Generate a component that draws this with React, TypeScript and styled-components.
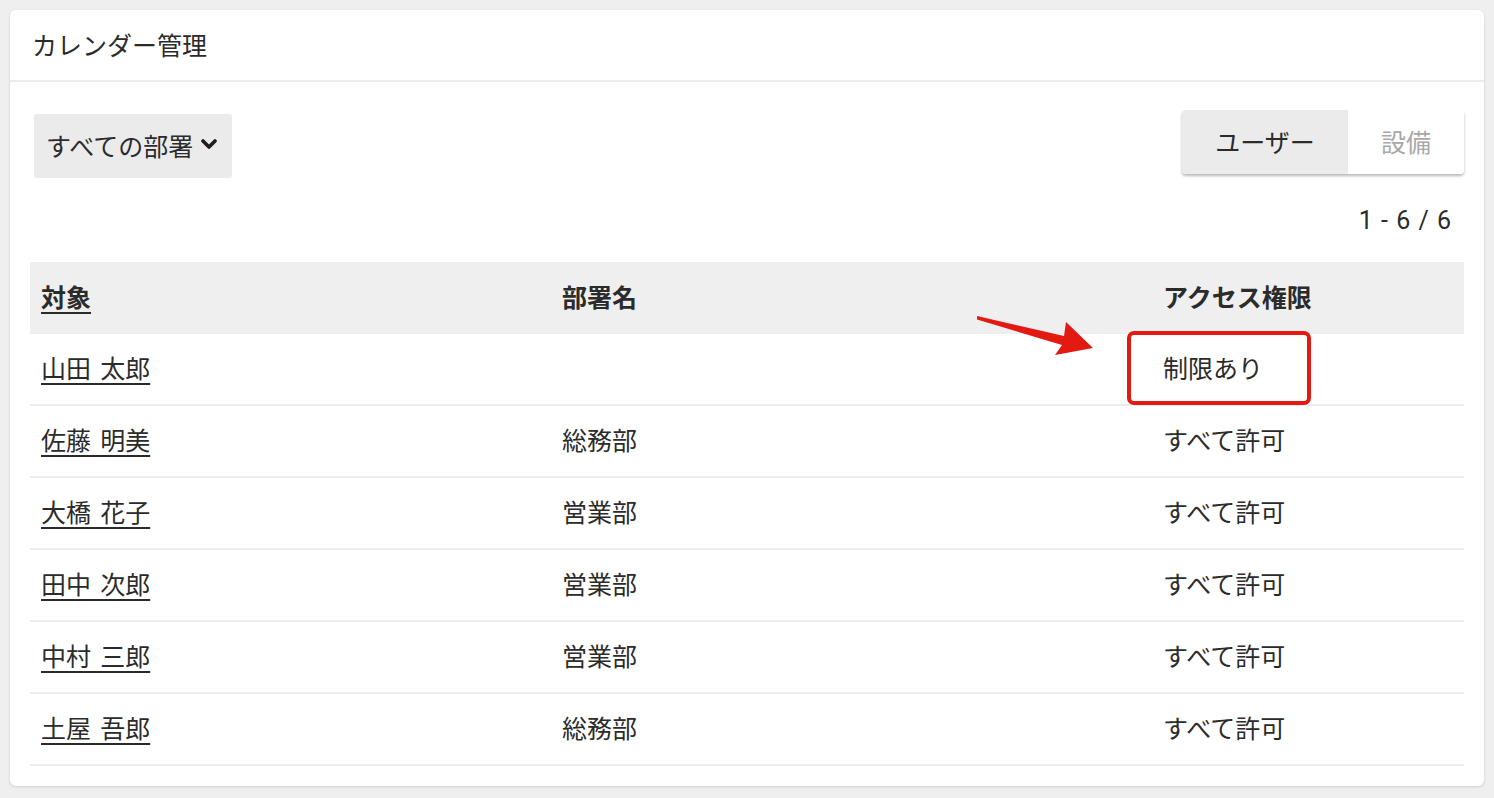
import React from 'react';
import styled, { createGlobalStyle } from 'styled-components';

const GlobalStyle = createGlobalStyle`
  body {
    margin: 0;
    padding: 10px;
    background: #efefef;
    font-family: Roboto, "Noto Sans CJK JP", "Noto Sans", sans-serif;
    color: #2b2b2b;
  }
`;

const Card = styled.div`
  width: 1474px;
  height: 776px;
  background: #fff;
  border-radius: 6px;
  box-shadow: 0 1px 3px rgba(0, 0, 0, 0.14);
  box-sizing: border-box;
  overflow: hidden;
`;

const CardHeader = styled.div`
  height: 70px;
  display: flex;
  align-items: center;
  padding: 0 0 3px 22px;
  box-sizing: border-box;
  font-size: 25px;
  border-bottom: 2px solid #ececec;
  box-sizing: content-box;
  height: 67px;
`;

const CardBody = styled.div`
  padding: 28px 20px 20px;
`;

const Toolbar = styled.div`
  display: flex;
  justify-content: space-between;
  align-items: flex-start;
`;

const Dropdown = styled.div`
  margin: 4px 0 0 4px;
  width: 198px;
  height: 64px;
  box-sizing: border-box;
  padding: 0 0 3px 12px;
  display: flex;
  align-items: center;
  gap: 8px;
  background: #ebebeb;
  border-radius: 3px;
  font-size: 25px;
`;

const Toggle = styled.div`
  display: flex;
  height: 64px;
  border-radius: 4px;
  overflow: hidden;
  box-shadow: 0 2px 3px rgba(0, 0, 0, 0.28);
`;

const ToggleButton = styled.div<{ $active?: boolean; $width: number }>`
  width: ${p => p.$width}px;
  display: flex;
  align-items: center;
  justify-content: center;
  padding-bottom: 3px;
  box-sizing: border-box;
  font-size: 25px;
  background: ${p => (p.$active ? '#ebebeb' : '#fff')};
  color: ${p => (p.$active ? '#2b2b2b' : '#a8a8a8')};
`;

const Count = styled.div`
  text-align: right;
  padding-right: 12px;
  font-size: 25px;
  letter-spacing: 1px;
  line-height: 28px;
  margin: 29px 0 27px;
`;

const Row = styled.div<{ $head?: boolean }>`
  display: grid;
  grid-template-columns: 521px 601px 1fr;
  height: ${p => (p.$head ? '72px' : '70px')};
  background: ${p => (p.$head ? '#efefef' : '#fff')};
  border-bottom: ${p => (p.$head ? 'none' : '2px solid #ececec')};
  font-weight: ${p => (p.$head ? 700 : 400)};
`;

const Cell = styled.div`
  position: relative;
  display: flex;
  align-items: center;
  padding: 0 0 4px 11px;
  font-size: 25px;
`;

const Link = styled.span`
  text-decoration: underline;
  text-underline-offset: 5px;
  text-decoration-thickness: 2px;
  word-spacing: 3px;
`;

const Highlight = styled.div`
  position: absolute;
  left: -25px;
  top: -3px;
  width: 184px;
  height: 74px;
  box-sizing: border-box;
  border: 4px solid #e31a12;
  border-radius: 7px;
`;

const Arrow = styled.svg`
  position: absolute;
  left: -175px;
  top: -18px;
  overflow: visible;
`;

const rows = [
  { name: '山田 太郎', dept: '', access: '制限あり', mark: true },
  { name: '佐藤 明美', dept: '総務部', access: 'すべて許可' },
  { name: '大橋 花子', dept: '営業部', access: 'すべて許可' },
  { name: '田中 次郎', dept: '営業部', access: 'すべて許可' },
  { name: '中村 三郎', dept: '営業部', access: 'すべて許可' },
  { name: '土屋 吾郎', dept: '総務部', access: 'すべて許可' },
];

function Chevron() {
  return (
    <svg width="16" height="11" viewBox="0 0 16 11">
      <path d="M2 2 L8 8 L14 2" fill="none" stroke="#1e1e1e" strokeWidth="3.6" strokeLinecap="round" strokeLinejoin="round" />
    </svg>
  );
}

export default function App() {
  return (
    <>
      <GlobalStyle />
      <Card>
        <CardHeader>カレンダー管理</CardHeader>
        <CardBody>
          <Toolbar>
            <Dropdown>
              すべての部署
              <Chevron />
            </Dropdown>
            <Toggle>
              <ToggleButton $active $width={166}>ユーザー</ToggleButton>
              <ToggleButton $width={116}>設備</ToggleButton>
            </Toggle>
          </Toolbar>
          <Count>1 - 6 / 6</Count>
          <Row $head>
            <Cell><Link>対象</Link></Cell>
            <Cell>部署名</Cell>
            <Cell>アクセス権限</Cell>
          </Row>
          {rows.map(r => (
            <Row key={r.name}>
              <Cell><Link>{r.name}</Link></Cell>
              <Cell>{r.dept}</Cell>
              <Cell>
                {r.access}
                {r.mark && (
                  <>
                    <Highlight />
                    <Arrow width="120" height="42" viewBox="0 0 120 42">
                      <polygon points="0,0 0,3.5 85,29 78,39 116,32 89,6 87,20" fill="#e31a12" />
                    </Arrow>
                  </>
                )}
              </Cell>
            </Row>
          ))}
        </CardBody>
      </Card>
    </>
  );
}
